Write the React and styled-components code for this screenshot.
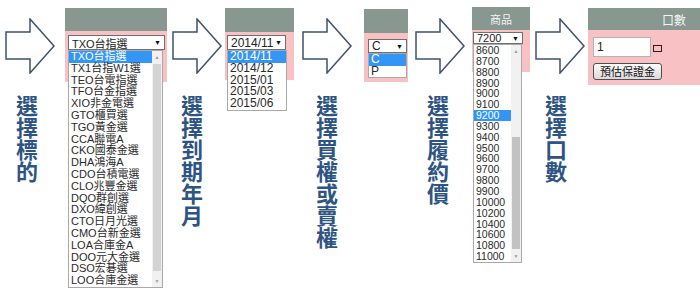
import React from 'react';
import styled, { createGlobalStyle } from 'styled-components';

const GlobalStyle = createGlobalStyle`
  html, body {
    margin: 0;
    padding: 0;
    background: #ffffff;
  }
  body {
    font-family: "Liberation Sans", "Noto Sans CJK TC", Arial, sans-serif;
  }
`;

const Page = styled.div`
  width: 700px;
  height: 304px;
  display: flex;
  align-items: flex-start;
  overflow: hidden;
`;

const Step = styled.div`
  display: flex;
  flex-direction: column;
  align-items: center;
  width: 50px;
  flex: none;
  margin: 18px ${(p) => p.$right}px 0 ${(p) => p.$left}px;
`;

const Label = styled.div`
  writing-mode: vertical-rl;
  margin-top: 21px;
  margin-right: ${(p) => p.$shift || 0}px;
  font-family: "Noto Sans CJK TC", "Noto Sans CJK SC", sans-serif;
  font-size: 22px;
  font-weight: 700;
  line-height: 22px;
  color: #2d5484;
`;

const Panel = styled.div`
  width: ${(p) => p.$w}px;
  flex: none;
  margin-top: ${(p) => p.$mt}px;
`;

const Header = styled.div`
  height: ${(p) => p.$h}px;
  background: #889891;
  color: #f4f4f4;
  font-family: "Noto Sans CJK TC", sans-serif;
  font-size: ${(p) => p.$fs || 11}px;
  display: flex;
  align-items: center;
  justify-content: ${(p) => (p.$end ? 'flex-end' : 'center')};
  padding-right: ${(p) => (p.$end ? 14 : 0)}px;
`;

const Body = styled.div`
  height: ${(p) => p.$h}px;
  background: #f8c2c5;
  box-sizing: border-box;
  padding: ${(p) => p.$pad};
`;

const SelectWrap = styled.div`
  position: relative;
  width: ${(p) => p.$w}px;
`;

const SelectBox = styled.div`
  box-sizing: border-box;
  height: ${(p) => p.$h}px;
  background: #ffffff;
  border: 1px solid #6f6f6f;
  display: flex;
  align-items: center;
  justify-content: space-between;
  padding: 0 3px 0 3px;
  font-size: ${(p) => p.$fs}px;
  color: #222;
  white-space: nowrap;
`;

const Caret = styled.span`
  font-size: 7px;
  color: #111;
`;

const DropList = styled.div`
  position: absolute;
  top: 100%;
  left: 0;
  width: ${(p) => p.$w}px;
  box-sizing: border-box;
  background: #ffffff;
  border: 1px solid #a9a9a9;
  display: flex;
  z-index: 2;
`;

const Items = styled.div`
  flex: 1;
  min-width: 0;
`;

const Item = styled.div`
  font-size: ${(p) => p.$fs}px;
  line-height: ${(p) => p.$lh}px;
  padding-left: 2px;
  white-space: nowrap;
  color: ${(p) => (p.$on ? '#ffffff' : '#2a2a2a')};
  background: ${(p) => (p.$on ? '#3396f5' : 'transparent')};
`;

const Scroll = styled.div`
  width: 10px;
  flex: none;
  background: #f1f1f1;
  display: flex;
  flex-direction: column;
`;

const ScrollArrow = styled.div`
  height: 11px;
  flex: none;
  font-size: 5px;
  color: #9a9a9a;
  display: flex;
  align-items: center;
  justify-content: center;
`;

const Track = styled.div`
  flex: 1;
  display: flex;
  flex-direction: column;
  padding: 1px 1px;
`;

const Gap = styled.div`
  height: ${(p) => p.$h}px;
  flex: none;
`;

const Thumb = styled.div`
  flex: 1;
  background: ${(p) => p.$c};
`;

const QtyRow = styled.div`
  display: flex;
  align-items: center;
  gap: 2px;
`;

const QtyInput = styled.div`
  box-sizing: border-box;
  width: 58px;
  height: 20px;
  background: #ffffff;
  border: 1px solid #b3b3b3;
  font-size: 12px;
  line-height: 18px;
  padding-left: 3px;
  color: #222;
`;

const Tick = styled.div`
  box-sizing: border-box;
  width: 9px;
  height: 7px;
  margin-top: 2px;
  border: 1.5px solid #3b1717;
`;

const EstButton = styled.div`
  box-sizing: border-box;
  margin-top: 6px;
  width: 69px;
  height: 17px;
  border: 1px solid #4f4f4f;
  border-radius: 3px;
  background: linear-gradient(#fbfbfb, #dadada);
  font-family: "Noto Sans CJK TC", sans-serif;
  font-size: 11px;
  line-height: 15px;
  text-align: center;
  color: #111;
`;

const Arrow = () => (
  <svg width="50" height="56" viewBox="0 0 50 56">
    <polygon
      points="1,14 25,14 25,1 49,28 25,55 25,41 1,41"
      fill="#ffffff"
      stroke="#3e5170"
      strokeWidth="1.5"
      strokeLinejoin="miter"
    />
  </svg>
);

const ScrollBar = ({ top, bottom, color }) => (
  <Scroll>
    <ScrollArrow>▲</ScrollArrow>
    <Track>
      <Gap $h={top} />
      <Thumb $c={color} />
      <Gap $h={bottom} />
    </Track>
    <ScrollArrow>▼</ScrollArrow>
  </Scroll>
);

const products = [
  'TXO台指選', 'TX1台指W1選', 'TEO台電指選', 'TFO台金指選', 'XIO非金電選',
  'GTO櫃買選', 'TGO黃金選', 'CCA聯電A', 'CKO國泰金選', 'DHA鴻海A',
  'CDO台積電選', 'CLO兆豐金選', 'DQO群創選', 'DXO緯創選', 'CTO日月光選',
  'CMO台新金選', 'LOA合庫金A', 'DOO元大金選', 'DSO宏碁選', 'LOO合庫金選',
];

const months = ['2014/11', '2014/12', '2015/01', '2015/03', '2015/06'];

const strikes = [
  '8600', '8700', '8800', '8900', '9000', '9100', '9200', '9300', '9400', '9500',
  '9600', '9700', '9800', '9900', '10000', '10200', '10400', '10600', '10800', '11000',
];

const App = () => (
  <>
    <GlobalStyle />
    <Page>
      <Step $left={5} $right={10}>
        <Arrow />
        <Label $shift={6}>選擇標的</Label>
      </Step>
      <Panel $w={102} $mt={8}>
        <Header $h={23} />
        <Body $h={51} $pad="4px 0 0 3px">
          <SelectWrap $w={97}>
            <SelectBox $h={15} $fs={11}>
              TXO台指選 <Caret>▼</Caret>
            </SelectBox>
            <DropList $w={95}>
              <Items>
                {products.map((p, i) => (
                  <Item key={p} $fs={11} $lh={11.8} $on={i === 0}>{p}</Item>
                ))}
              </Items>
              <ScrollBar top={1} bottom={4} color="#d3d3d3" />
            </DropList>
          </SelectWrap>
        </Body>
      </Panel>

      <Step $left={5} $right={3}>
        <Arrow />
        <Label $shift={10}>選擇到期年月</Label>
      </Step>
      <Panel $w={69} $mt={8}>
        <Header $h={24} />
        <Body $h={48} $pad="3px 0 0 2px">
          <SelectWrap $w={59}>
            <SelectBox $h={15} $fs={12}>
              2014/11 <Caret>▼</Caret>
            </SelectBox>
            <DropList $w={60}>
              <Items>
                {months.map((m, i) => (
                  <Item key={m} $fs={12} $lh={11.8} $on={i === 0}>{m}</Item>
                ))}
              </Items>
            </DropList>
          </SelectWrap>
        </Body>
      </Panel>

      <Step $left={8} $right={12}>
        <Arrow />
        <Label>選擇買權或賣權</Label>
      </Step>
      <Panel $w={44} $mt={9}>
        <Header $h={24} />
        <Body $h={49} $pad="6px 0 0 4px">
          <SelectWrap $w={39}>
            <SelectBox $h={14} $fs={12}>
              C <Caret>▼</Caret>
            </SelectBox>
            <DropList $w={39}>
              <Items>
                <Item $fs={12} $lh={11.5} $on>C</Item>
                <Item $fs={12} $lh={11.5}>P</Item>
              </Items>
            </DropList>
          </SelectWrap>
        </Body>
      </Panel>

      <Step $left={7} $right={7}>
        <Arrow />
        <Label $shift={4}>選擇履約價</Label>
      </Step>
      <Panel $w={58} $mt={7}>
        <Header $h={23} $fs={11}>商品</Header>
        <Body $h={42} $pad="2px 0 0 1px">
          <SelectWrap $w={50}>
            <SelectBox $h={12} $fs={11}>
              7200 <Caret>▼</Caret>
            </SelectBox>
            <DropList $w={49}>
              <Items>
                {strikes.map((s) => (
                  <Item key={s} $fs={10.5} $lh={10.85} $on={s === '9200'}>{s}</Item>
                ))}
              </Items>
              <ScrollBar top={80} bottom={1} color="#c2c2c2" />
            </DropList>
          </SelectWrap>
        </Body>
      </Panel>

      <Step $left={5} $right={3}>
        <Arrow />
        <Label $shift={8}>選擇口數</Label>
      </Step>
      <Panel $w={112} $mt={8}>
        <Header $h={22} $fs={12} $end>口數</Header>
        <Body $h={55} $pad="7px 0 0 5px">
          <QtyRow>
            <QtyInput>1</QtyInput>
            <Tick />
          </QtyRow>
          <EstButton>預估保證金</EstButton>
        </Body>
      </Panel>
    </Page>
  </>
);

export default App;
